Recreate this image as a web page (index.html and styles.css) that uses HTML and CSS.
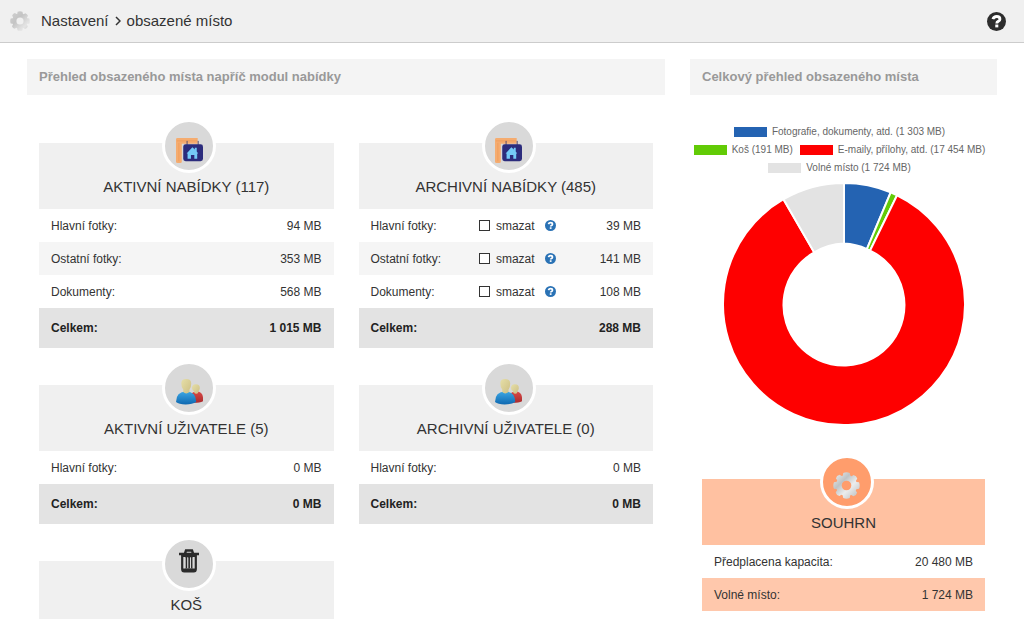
FILE: index.html
```html
<!DOCTYPE html>
<html lang="cs">
<head>
<meta charset="utf-8">
<title>Nastavení › obsazené místo</title>
<meta name="viewport" content="width=device-width, initial-scale=1">
<link rel="stylesheet" href="styles.css">
</head>
<body>
<svg class="sprite" aria-hidden="true">
  <defs>
    <linearGradient id="steel" x1="0" y1="0" x2="1" y2="1">
      <stop offset="0" stop-color="#f2f2f2"/><stop offset=".35" stop-color="#bfc3c5"/>
      <stop offset=".6" stop-color="#eceded"/><stop offset="1" stop-color="#b4b8ba"/>
    </linearGradient>
    <linearGradient id="steel-light" x1="0" y1="0" x2="1" y2="1">
      <stop offset="0" stop-color="#d2d2d2"/><stop offset=".4" stop-color="#c4c4c4"/>
      <stop offset=".75" stop-color="#e4e4e4"/><stop offset="1" stop-color="#cfcfcf"/>
    </linearGradient>
    <linearGradient id="blue" x1="0" y1="0" x2="0" y2="1">
      <stop offset="0" stop-color="#3da7e4"/><stop offset="1" stop-color="#0e68b0"/>
    </linearGradient>
    <linearGradient id="red" x1="0" y1="0" x2="0" y2="1">
      <stop offset="0" stop-color="#d94a48"/><stop offset="1" stop-color="#ab2b2d"/>
    </linearGradient>
    <linearGradient id="skin" x1="0" y1="0" x2="1" y2="1">
      <stop offset="0" stop-color="#e6dfa8"/><stop offset="1" stop-color="#cdbf84"/>
    </linearGradient>
    <symbol id="gear" viewBox="-14 -14 28 28">
      <path fill-rule="evenodd" d="M-3.4-13Q0-14.400 3.400-13L4-10.200L5.400-9.600L7.200-11Q10.400-10.400 11.200-7.200L9.800-5L10.300-3.700L13-3.400Q14.400 0 13 3.400L10.200 4L9.600 5.400L11 7.200Q10.400 10.400 7.200 11.200L5 9.800L3.700 10.300L3.400 13Q0 14.400-3.400 13L-4 10.200L-5.400 9.600L-7.200 11Q-10.400 10.400-11.200 7.200L-9.800 5L-10.300 3.700L-13 3.400Q-14.400 0-13-3.400L-10.200-4L-9.600-5.400L-11-7.200Q-10.400-10.400-7.200-11.200L-5-9.800L-3.700-10.300ZM0-5A5 5 0 1 0 0 5A5 5 0 1 0 0-5Z"/>
    </symbol>
    <symbol id="question" viewBox="0 0 20 20">
      <circle cx="10" cy="10" r="10"/>
      <path d="M6.200 7.500Q7.200 4.700 10.200 4.700Q13.600 4.700 13.600 7.500Q13.600 9.100 11.800 9.900Q10.300 10.600 10.300 12" fill="none" stroke="#fff" stroke-width="3"/>
      <path d="M8.700 13.200h3.200v3H8.700z" fill="#fff"/>
    </symbol>
    <symbol id="house" viewBox="0 0 28 28">
      <path d="M0 1.500Q0 0 1.500 0H22.500V6H6V24.500Q6 26 4.500 26H1.500Q0 26 0 24.500Z" fill="#f5ac70"/>
      <path d="M1 3H22M3 5V24" stroke="#f09d5c" stroke-width="1" fill="none"/>
      <path d="M11.500 3V8M23 3V8" stroke="#554a68" stroke-width="1"/>
      <rect x="7.500" y="6.500" width="20.500" height="17.500" rx="2.500" fill="#2c2c7c"/>
      <path d="M11 16L17 9.500L19.500 12V10H21.500V14L23 16H22V21.500H19V17.500H15.500V21.500H12V16Z" fill="#74caf7"/>
    </symbol>
    <symbol id="users" viewBox="0 0 28 28">
      <path d="M15 25.500V18Q17 14 21 14Q27.500 14 28 20V24Q24 26 15 25.500Z" fill="url(#red)"/>
      <path d="M16.500 10Q17 6.500 20.500 6.500Q25 6.500 24.700 10.500Q24.500 13 23 14V15.500Q21 17 19 15.500V14Q16.500 12.500 16.500 10Z" fill="url(#skin)"/>
      <path d="M0 25Q0 14 10.500 14Q21 14 21 25Q17 27.500 10 27.500Q3 27.500 0 25Z" fill="url(#blue)"/>
      <path d="M5.500 5.500Q5.500 1 10.500 1Q15.800 1 15.800 5.500Q15.800 10 14 12V14.500Q10.500 17.500 7.500 14.500V12Q5.500 9.500 5.500 5.500Z" fill="url(#skin)"/>
    </symbol>
    <symbol id="trash" viewBox="0 0 20 24">
      <path d="M6 4.500L7 1.500H13L14 4.500M0 5H20" fill="none" stroke="#2b2b2b" stroke-width="2.400"/>
      <path d="M3.200 5V20Q3.200 22.500 5.200 22.500H14.800Q16.800 22.500 16.800 20V5M7.400 7.500V19.500M10 7.500V19.500M12.600 7.500V19.500" fill="none" stroke="#2b2b2b" stroke-width="2.200"/>
      <path d="M3 6h14v2H3zM3 19.500h14V22H3z" fill="#2b2b2b"/>
      <path d="M6 8.500V19M8.800 8.500V19M11.500 8.500V19M14.200 8.500V19" stroke="#d9d9d9" stroke-width="1.100"/>
    </symbol>
  </defs>
</svg>

<header class="topbar">
  <svg class="topbar-gear"><use href="#gear"/></svg>
  <nav class="crumbs" aria-label="Navigace">
    <span>Nastavení</span>
    <svg class="chevron" viewBox="0 0 6 10"><path d="M1 1L5 5L1 9"/></svg>
    <span>obsazené místo</span>
  </nav>
  <button class="help-main" type="button" aria-label="Nápověda"><svg><use href="#question"/></svg></button>
</header>

<main class="content">
  <section class="modules">
    <h1 class="section-title">Přehled obsazeného místa napříč modul nabídky</h1>
    <div class="cards">
      <article class="card">
        <header class="card-head"><span class="badge"><svg class="icon icon-house"><use href="#house"/></svg></span><h2>AKTIVNÍ NABÍDKY (117)</h2></header>
        <table>
          <tbody>
            <tr><th scope="row">Hlavní fotky:</th><td>94 MB</td></tr>
            <tr><th scope="row">Ostatní fotky:</th><td>353 MB</td></tr>
            <tr><th scope="row">Dokumenty:</th><td>568 MB</td></tr>
          </tbody>
          <tfoot><tr><th scope="row">Celkem:</th><td>1 015 MB</td></tr></tfoot>
        </table>
      </article>
      <article class="card">
        <header class="card-head"><span class="badge"><svg class="icon icon-house"><use href="#house"/></svg></span><h2>ARCHIVNÍ NABÍDKY (485)</h2></header>
        <table>
          <tbody>
            <tr><th scope="row">Hlavní fotky:</th><td class="action"><div class="erase"><label><input type="checkbox">smazat</label><button type="button" aria-label="Nápověda"><svg><use href="#question"/></svg></button></div></td><td>39 MB</td></tr>
            <tr><th scope="row">Ostatní fotky:</th><td class="action"><div class="erase"><label><input type="checkbox">smazat</label><button type="button" aria-label="Nápověda"><svg><use href="#question"/></svg></button></div></td><td>141 MB</td></tr>
            <tr><th scope="row">Dokumenty:</th><td class="action"><div class="erase"><label><input type="checkbox">smazat</label><button type="button" aria-label="Nápověda"><svg><use href="#question"/></svg></button></div></td><td>108 MB</td></tr>
          </tbody>
          <tfoot><tr><th scope="row">Celkem:</th><td colspan="2">288 MB</td></tr></tfoot>
        </table>
      </article>
      <article class="card">
        <header class="card-head"><span class="badge"><svg class="icon"><use href="#users"/></svg></span><h2>AKTIVNÍ UŽIVATELE (5)</h2></header>
        <table>
          <tbody><tr><th scope="row">Hlavní fotky:</th><td>0 MB</td></tr></tbody>
          <tfoot><tr><th scope="row">Celkem:</th><td>0 MB</td></tr></tfoot>
        </table>
      </article>
      <article class="card">
        <header class="card-head"><span class="badge"><svg class="icon"><use href="#users"/></svg></span><h2>ARCHIVNÍ UŽIVATELE (0)</h2></header>
        <table>
          <tbody><tr><th scope="row">Hlavní fotky:</th><td>0 MB</td></tr></tbody>
          <tfoot><tr><th scope="row">Celkem:</th><td>0 MB</td></tr></tfoot>
        </table>
      </article>
      <article class="card">
        <header class="card-head"><span class="badge badge-trash"><svg class="icon-trash"><use href="#trash"/></svg></span><h2>KOŠ</h2></header>
      </article>
    </div>
  </section>

  <section class="overview">
    <h1 class="section-title">Celkový přehled obsazeného místa</h1>
    <ul class="legend">
      <li><i class="swatch photos"></i>Fotografie, dokumenty, atd. (1 303 MB)</li>
      <li><i class="swatch bin"></i>Koš (191 MB)</li>
      <li><i class="swatch mail"></i>E-maily, přílohy, atd. (17 454 MB)</li>
      <li><i class="swatch free"></i>Volné místo (1 724 MB)</li>
    </ul>
    <svg class="donut" viewBox="-122 -122 244 244" role="img" aria-label="Graf obsazeného místa">
      <path fill="#2463b2" d="M0-122A122 122 0 0 1 47.100-112.600L23.100-55.400A61 61 0 0 0 0-61Z"/>
      <path fill="#62cb06" d="M47.100-112.600A122 122 0 0 1 53.500-109.600L26.300-53.900A61 61 0 0 0 23.100-55.400Z"/>
      <path fill="#fe0000" d="M53.500-109.600A122 122 0 1 1-61-105.600L-30-52A61 61 0 1 0 26.300-53.900Z"/>
      <path fill="#e3e3e3" d="M-61-105.600A122 122 0 0 1 0-122V-61A61 61 0 0 0-30-52Z"/>
    </svg>
    <article class="card summary">
      <header class="card-head"><span class="badge"><svg class="icon icon-gear"><use href="#gear"/></svg></span><h2>SOUHRN</h2></header>
      <table>
        <tbody>
          <tr><th scope="row">Předplacena kapacita:</th><td>20 480 MB</td></tr>
          <tr><th scope="row">Volné místo:</th><td>1 724 MB</td></tr>
        </tbody>
      </table>
    </article>
  </section>
</main>
</body>
</html>
```

FILE: styles.css
```css
* { box-sizing: border-box; }

body {
  margin: 0;
  height: 100vh;
  overflow: hidden;
  background: #fff;
  color: #333;
  font: 12px/16px "Liberation Sans", Arial, sans-serif;
}

h1, h2, ul { margin: 0; padding: 0; }
svg { display: block; }
.sprite { position: absolute; width: 0; height: 0; }

button {
  padding: 0;
  border: 0;
  background: none;
  cursor: pointer;
}

.topbar {
  display: flex;
  align-items: center;
  height: 43px;
  padding: 0 18px 0 10px;
  background: #f0f0f0;
  border-bottom: 1px solid #ccc;
}
.topbar-gear { width: 20px; height: 20px; fill: url(#steel-light); }
.crumbs {
  display: flex;
  align-items: center;
  gap: 6px;
  margin-left: 11px;
  font-size: 15px;
}
.chevron {
  width: 6px;
  height: 10px;
  fill: none;
  stroke: #333;
  stroke-width: 1.5;
}
.help-main { margin-left: auto; color: #2d2d2d; }
.help-main svg { width: 19px; height: 19px; fill: currentColor; }

.content {
  display: grid;
  grid-template-columns: 638fr 307fr;
  gap: 25px;
  padding: 16px 27px;
}
.section-title {
  padding: 9px 12px;
  background: #f4f4f4;
  color: #999;
  font-size: 13px;
  line-height: 18px;
}

.cards {
  display: grid;
  grid-template-columns: 1fr 1fr;
  gap: 37px 25px;
  padding: 48px 12px 0;
}
.card-head {
  position: relative;
  height: 66px;
  padding-top: 34px;
  background: #f0f0f0;
  text-align: center;
}
.card-head h2 {
  font-size: 15px;
  font-weight: 400;
  line-height: 20px;
}
.badge {
  position: absolute;
  top: -24px;
  left: calc(50% - 24px);
  display: flex;
  justify-content: center;
  width: 54px;
  height: 54px;
  padding-top: 14px;
  border: 3px solid #fff;
  border-radius: 50%;
  background: #d9d9d9;
}
.icon { width: 27px; height: 27px; }
.icon-house { margin-top: 2px; }
.icon-gear { fill: url(#steel); }
.badge-trash { padding-top: 9px; }
.icon-trash { width: 20px; height: 24px; }

table { width: 100%; border-collapse: collapse; }
th, td { height: 33px; padding: 0 12px; }
th { font-weight: 400; text-align: left; }
td { text-align: right; }
tbody tr:nth-child(even) { background: #f5f5f5; }
tfoot tr { background: #e3e3e3; color: #222; }
tfoot th, tfoot td { height: 40px; font-weight: 700; }
.action { width: 91px; padding: 0; }
.erase { display: flex; align-items: center; gap: 10px; }
.erase label { display: flex; align-items: center; gap: 6px; }
.erase input {
  appearance: none;
  width: 11px;
  height: 11px;
  margin: 0;
  border: 1px solid #333;
  background: #fff;
}
.erase svg { width: 11px; height: 11px; fill: #2a72b5; }

.legend {
  display: flex;
  flex-wrap: wrap;
  justify-content: center;
  column-gap: 7px;
  margin-top: 28px;
  padding-right: 8px;
  list-style: none;
  color: #666;
  font-size: 10px;
  line-height: 18px;
}
.legend li { display: flex; align-items: center; gap: 5px; white-space: nowrap; }
.swatch { width: 33px; height: 10px; }
.photos { background: #2463b2; }
.bin { background: #62cb06; }
.mail { background: #fe0000; }
.free { background: #e3e3e3; }

.donut {
  width: 242px;
  max-width: 100%;
  margin: 6px auto 0;
  stroke: #fff;
  stroke-width: 2;
}

.summary { margin: 54px 12px 0; }
.summary .card-head { background: #ffc1a1; }
.summary .badge { background: #ff9d6c; }
.summary tbody tr:nth-child(even) { background: #ffc8ac; }
```
